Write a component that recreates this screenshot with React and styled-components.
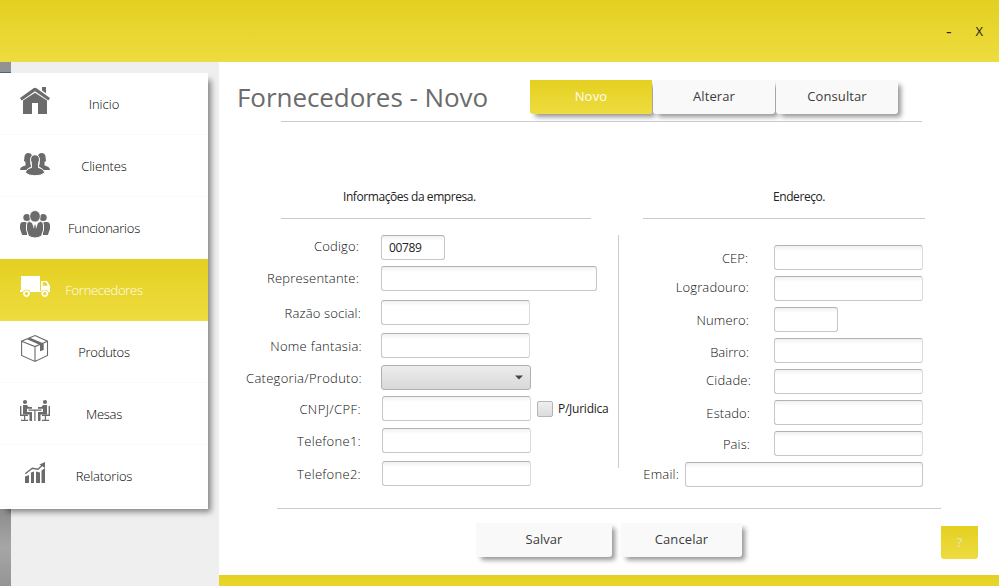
import React from "react";
import styled, { createGlobalStyle, css } from "styled-components";

const GlobalStyle = createGlobalStyle`
  * { box-sizing: border-box; }
  body { margin: 0; font-family: "Open Sans", "Noto Sans", sans-serif; overflow: hidden; }
  button, input { font: inherit; border: 0; margin: 0; padding: 0; }
  button { cursor: pointer; white-space: nowrap; }
`;

const yellow = "linear-gradient(#e4d020, #eedc40)";

const Window = styled.div`
  width: 999px;
  height: 586px;
  display: flex;
  flex-direction: column;
  background: #fff;
  overflow: hidden;
`;

const TitleBar = styled.header`
  height: 62px;
  flex: none;
  display: flex;
  justify-content: flex-end;
  align-items: center;
  gap: 24px;
  padding-right: 16px;
  background: ${yellow};
`;

const WindowButton = styled.button`
  background: none;
  font-size: ${(p) => p.$size || 13}px;
  line-height: 18px;
  color: #222;
`;

const Body = styled.div`
  flex: 1;
  display: flex;
  min-height: 0;
`;

const Sidebar = styled.aside`
  width: 219px;
  display: flex;
  flex-direction: column;
  background: #efefef;
`;

const EdgeTop = styled.div`
  width: 11px;
  height: 11px;
  background: #929292;
  border-bottom: 1px solid #48657c;
`;

const EdgeBottom = styled.div`
  width: 11px;
  flex: 1;
  background: linear-gradient(#8c8c8c, #a6a6a6 50%, #959595);
`;

const Menu = styled.nav`
  width: 208px;
  height: 436px;
  background: #fff;
  box-shadow: 5px 5px 6px -2px rgba(0, 0, 0, 0.45);
  position: relative;
`;

const MenuItem = styled.button`
  width: 208px;
  height: 62px;
  display: grid;
  grid-template-columns: 1fr auto 1fr;
  background: ${(p) => (p.$active ? yellow : "#fff")};
  color: ${(p) => (p.$active ? "#fffef4" : "#000")};
  border-bottom: ${(p) => (p.$active ? "0" : "1px solid #fbfbfb")};
  text-align: left;
  font-size: 13px;
  font-weight: 300;
`;

const MenuIcon = styled.svg`
  width: 30px;
  height: 30px;
  margin: 13px 0 0 20px;
  color: ${(p) => (p.$active ? "#fff" : "#6b6b6b")};
  fill: currentColor;
`;

const MenuText = styled.span`
  line-height: 62px;
  letter-spacing: ${(p) => p.$ls || 0}px;
`;

const Main = styled.main`
  width: 780px;
  display: flex;
  flex-direction: column;
`;

const Heading = styled.div`
  height: 59px;
  display: flex;
  align-items: flex-start;
  padding: 18px 0 0 18px;
`;

const Title = styled.h1`
  width: 293px;
  margin: -1px 0 0;
  font-size: 26px;
  line-height: 36px;
  font-weight: 400;
  letter-spacing: -0.06px;
  color: #6b6b6b;
  white-space: nowrap;
`;

const Tabs = styled.div`
  display: flex;
  gap: 1px;
`;

const ActionButton = styled.button`
  width: ${(p) => p.$w}px;
  height: 34px;
  padding-bottom: 2px;
  border-radius: 0 0 3px 3px;
  background: ${(p) => (p.$active ? yellow : "#f9f9f9")};
  color: ${(p) => (p.$active ? "#fffef4" : "#3c3c3c")};
  font-size: 13px;
  line-height: 32px;
  letter-spacing: ${(p) => p.$ls || 0}px;
  box-shadow: 4px 4px 5px -1px rgba(0, 0, 0, 0.42);
`;

const Rule = styled.div`
  height: 1px;
  flex: none;
  width: ${(p) => p.$w}px;
  margin-left: ${(p) => p.$x}px;
  background: #cbcbcb;
`;

const Form = styled.form`
  height: 386px;
  display: flex;
`;

const Section = styled.section`
  width: ${(p) => p.$w}px;
  display: flex;
  flex-direction: column;
`;

const SectionTitle = styled.h2`
  margin: 66px 0 0;
  padding-left: ${(p) => p.$x}px;
  height: 30px;
  font-size: 12px;
  line-height: 18px;
  font-weight: 400;
  letter-spacing: ${(p) => p.$ls}px;
  color: #222;
  white-space: nowrap;
`;

const Divider = styled.div`
  width: 1px;
  height: 233px;
  margin-top: 113px;
  background: #cbcbcb;
`;

const FieldRow = styled.div`
  height: 25px;
  margin-top: ${(p) => p.$mt}px;
  display: flex;
`;

const Label = styled.label`
  flex: none;
  width: ${(p) => p.$end}px;
  margin-right: ${(p) => p.$gap}px;
  padding-top: ${(p) => p.$dy}px;
  text-align: right;
  font-size: 13px;
  line-height: 20px;
  font-weight: 300;
  letter-spacing: ${(p) => p.$ls || 0}px;
  color: #111;
  white-space: nowrap;
`;

const box = css`
  width: ${(p) => p.$w}px;
  height: 25px;
  border: 1px solid #c6c6c6;
  border-top-color: #b2b2b2;
  border-radius: 3px;
`;

const Input = styled.input`
  ${box}
  border-right-color: ${(p) => (p.$w === 149 ? "#dadada" : "#c6c6c6")};
  padding: 0 7px;
  font-size: 12px;
  letter-spacing: -0.35px;
  color: #222;
  background: linear-gradient(#f1f1f1, #fff 5px);
  outline: none;
`;

const Select = styled.button`
  ${box}
  display: flex;
  align-items: center;
  justify-content: flex-end;
  padding-right: 7px;
  border-color: #b0b0b0;
  background: linear-gradient(#ececec, #d9d9d9);
`;

const CheckLabel = styled.label`
  display: flex;
  align-items: center;
  gap: 5px;
  margin-left: 6px;
  font-size: 12px;
  letter-spacing: -0.25px;
  color: #222;
  white-space: nowrap;
`;

const CheckBox = styled.span`
  width: 16px;
  height: 16px;
  border: 1px solid #b4b4b4;
  border-radius: 2px;
  background: linear-gradient(#efefef, #dcdcdc);
`;

const Footer = styled.div`
  flex: 1;
  display: flex;
  align-items: flex-start;
  padding: 14px 0 0 257px;
  gap: 9px;
`;

const HelpButton = styled.button`
  width: 37px;
  height: 33px;
  margin: 3px 0 0 190px;
  padding-bottom: 2px;
  border-radius: 0 0 3px 3px;
  background: ${yellow};
  color: #e6e6d8;
  font-size: 13px;
`;

const BottomBar = styled.div`
  height: 11px;
  flex: none;
  background: linear-gradient(#e4d020, #e8d62e);
`;

const icons = {
  home: (
    <>
      <path d="M0 12 L13.5 2.2 Q15 1.2 16.5 2.2 L30 12 L28.3 14.4 L15 5.2 L1.7 14.4Z" />
      <path d="M22 1h4v6.2l-4-2.8z" />
      <path d="M3 14.5 L15 6.8 L27 14.5 V28 H18 V17 H12 V28 H3Z" />
    </>
  ),
  clients: (
    <>
      <path d="M4.5 8.5 Q5 5 8.2 5 Q12 5 12 9 L10.3 12 V16 L11.3 18.2 Q8.5 19.5 8.5 22 H0 Q0 18.8 5.5 17.5 V14 L4 13Z" />
      <path d="M25.5 8.5 Q25 5 21.8 5 Q18 5 18 9 L19.7 12 V16 L18.7 18.2 Q21.5 19.5 21.5 22 H30 Q30 18.8 24.5 17.5 V14 L26 13Z" />
      <path
        stroke="#fff"
        strokeWidth="1"
        d="M10.5 12 Q10.7 6.8 15 6.8 Q19.3 6.8 19.5 12 L18.5 15.5 V19.5 Q24.5 21 24.5 25 Q21 27.8 15 27.8 Q9 27.8 5.5 25 Q5.5 21 11.5 19.5 V15.5Z"
      />
    </>
  ),
  staff: (
    <>
      <circle cx="6.8" cy="7.5" r="3.5" />
      <circle cx="23.2" cy="7.5" r="3.5" />
      <path d="M3 12 Q0 12 0 16 V19 L2.2 25 H7 L7.8 13 L5 12Z" />
      <path d="M27 12 Q30 12 30 16 V19 L27.8 25 H23 L22.2 13 L25 12Z" />
      <path
        stroke="#fff"
        strokeWidth="1"
        d="M9.5 11.3 L15 14 L20.5 11.3 Q23.5 11.5 23.5 15 V20 L21.5 26 Q15 30 8.5 26 L6.5 20 V15 Q6.5 11.5 9.5 11.3Z"
      />
      <ellipse cx="15" cy="6.3" rx="5.3" ry="5.8" stroke="#fff" strokeWidth=".8" />
      <path fill="#fff" d="M11.8 12.3 L14 19 L14.5 14.8 H15.5 L16 19 L18.2 12.3 L15 13.8Z" />
    </>
  ),
  truck: (
    <>
      <path d="M1 4h19v16H10.5a4.4 4.4 0 0 0-8 0H0v-2h1z" />
      <path
        fillRule="evenodd"
        d="M21 9h6l3 5v6h-1.5a4.3 4.3 0 0 0-7.5 0H10v-1h11z M22.7 10.3v3.5h5l-1.7-3.5z"
      />
      <path
        fillRule="evenodd"
        d="M6.5 18.2a3.4 3.4 0 1 0 .01 0z M6.5 20a1.6 1.6 0 1 1-.01 0z M24.8 18.2a3.4 3.4 0 1 0 .01 0z M24.8 20a1.6 1.6 0 1 1-.01 0z"
      />
    </>
  ),
  box: (
    <>
      <path
        fill="none"
        stroke="currentColor"
        strokeWidth="1.1"
        d="M15 1.6 L27.5 7.2 V21.5 L15 27.4 L1.6 21.5 V7.2Z M1.6 7.2 L15 12.6 L27.5 7.2 M15 12.6 V27.4"
      />
      <path d="M7 5.2 L10 3.8 L23.7 9.5 V16 L20 17.3 V11Z" />
    </>
  ),
  table: (
    <>
      <circle cx="5" cy="6" r="2.1" />
      <circle cx="25" cy="6" r="2.1" />
      <path d="M3 9h4l1.5 2H12v1.7H7V16h5v9H9.5v-6.5H3z" />
      <path d="M27 9h-4l-1.5 2H18v1.7h5V16h-5v9h2.5v-6.5H27z" />
      <path d="M0 10h1.4v8.5H8V20H5.2v3.7H8V25H1v-1.3h3V20H0z" />
      <path d="M30 10h-1.4v8.5H22V20h2.8v3.7H22V25h7v-1.3h-3V20h4z" />
      <path d="M8.5 13.5h13v1.3h-6V25h-1.2V14.8H8.5z" />
    </>
  ),
  chart: (
    <>
      <path d="M5 18.5l4-1.5v8H5zM11 14.5l3-1v11.5h-3zM16 13.5l4 1v10.5h-4zM21.5 12.5l3.5-2.5v15h-3.5z" />
      <path fill="none" stroke="currentColor" strokeWidth="1.4" d="M5.3 15.8 L12.3 10.2 L18 11.3 L23 6.5" />
      <path d="M25 4 V10 L19.5 6.5Z" />
    </>
  ),
};

const menu = [
  { text: "Inicio", icon: "home" },
  { text: "Clientes", icon: "clients", ls: -0.12 },
  { text: "Funcionarios", icon: "staff", ls: -0.24 },
  { text: "Fornecedores", icon: "truck", ls: -0.3, active: true },
  { text: "Produtos", icon: "box", ls: -0.28 },
  { text: "Mesas", icon: "table", ls: -0.25 },
  { text: "Relatorios", icon: "chart", ls: -0.2 },
];

const company = [
  { text: "Codigo:", ls: 0.15, mt: 16, end: 140, gap: 22, dy: 1, w: 64, value: "00789" },
  { text: "Representante:", ls: 0.2, mt: 6, end: 140, gap: 22, dy: 2, w: 216 },
  { text: "Razão social:", ls: 0.17, mt: 9, end: 142, gap: 20, dy: 3, w: 149 },
  { text: "Nome fantasia:", ls: 0.29, mt: 8, end: 143, gap: 19, dy: 3, w: 149 },
  { text: "Categoria/Produto:", ls: 0.28, mt: 7, end: 143, gap: 19, dy: 3, w: 150, select: true },
  { text: "CNPJ/CPF:", ls: 0.4, mt: 6, end: 142, gap: 21, dy: 3, w: 149, check: "P/Juridica" },
  { text: "Telefone1:", ls: 0.3, mt: 7, end: 142, gap: 21, dy: 3, w: 149 },
  { text: "Telefone2:", ls: 0.3, mt: 8, end: 142, gap: 21, dy: 3, w: 149 },
];

const address = [
  { text: "CEP:", mt: 26, end: 129, gap: 26, dy: 3, w: 149 },
  { text: "Logradouro:", ls: 0.13, mt: 6, end: 130, gap: 25, dy: 1, w: 149 },
  { text: "Numero:", ls: 0.15, mt: 6, end: 130, gap: 25, dy: 3, w: 64 },
  { text: "Bairro:", mt: 6, end: 130, gap: 25, dy: 4, w: 149 },
  { text: "Cidade:", ls: 0.2, mt: 6, end: 132, gap: 23, dy: 1, w: 149 },
  { text: "Estado:", ls: 0.1, mt: 6, end: 131, gap: 24, dy: 3, w: 149 },
  { text: "Pais:", ls: 0.1, mt: 6, end: 131, gap: 24, dy: 3, w: 149 },
  { text: "Email:", ls: 0.2, mt: 6, end: 60, gap: 6, dy: 2, w: 238 },
];

function Field({ field }) {
  return (
    <FieldRow $mt={field.mt}>
      <Label $end={field.end} $gap={field.gap} $dy={field.dy} $ls={field.ls}>
        {field.text}
      </Label>
      {field.select ? (
        <Select type="button" $w={field.w} aria-label={field.text}>
          <svg width="8" height="5" viewBox="0 0 8 5">
            <path d="M0 .5h8L4 4.5z" fill="#444" />
          </svg>
        </Select>
      ) : (
        <Input $w={field.w} defaultValue={field.value} aria-label={field.text} />
      )}
      {field.check && (
        <CheckLabel>
          <CheckBox />
          {field.check}
        </CheckLabel>
      )}
    </FieldRow>
  );
}

export default function App() {
  return (
    <Window>
      <GlobalStyle />
      <TitleBar>
        <WindowButton $size={17}>-</WindowButton>
        <WindowButton>X</WindowButton>
      </TitleBar>
      <Body>
        <Sidebar>
          <EdgeTop />
          <Menu>
            {menu.map((m) => (
              <MenuItem key={m.text} $active={m.active}>
                <MenuIcon viewBox="0 0 30 30" $active={m.active}>
                  {icons[m.icon]}
                </MenuIcon>
                <MenuText $ls={m.ls}>{m.text}</MenuText>
              </MenuItem>
            ))}
          </Menu>
          <EdgeBottom />
        </Sidebar>
        <Main>
          <Heading>
            <Title>Fornecedores - Novo</Title>
            <Tabs>
              <ActionButton $w={122} $ls={0.2} $active>Novo</ActionButton>
              <ActionButton $w={122} $ls={0.1}>Alterar</ActionButton>
              <ActionButton $w={122} $ls={0.1}>Consultar</ActionButton>
            </Tabs>
          </Heading>
          <Rule $x={62} $w={641} />
          <Form>
            <Section $w={399}>
              <SectionTitle $x={124} $ls={-0.43}>Informações da empresa.</SectionTitle>
              <Rule $x={62} $w={310} />
              {company.map((f) => (
                <Field key={f.text} field={f} />
              ))}
            </Section>
            <Divider />
            <Section $w={380}>
              <SectionTitle $x={154} $ls={-0.42}>Endereço.</SectionTitle>
              <Rule $x={24} $w={282} />
              {address.map((f) => (
                <Field key={f.text} field={f} />
              ))}
            </Section>
          </Form>
          <Rule $x={58} $w={664} />
          <Footer>
            <ActionButton $w={136} $ls={0.05}>Salvar</ActionButton>
            <ActionButton $w={121} $ls={0.1}>Cancelar</ActionButton>
            <HelpButton>?</HelpButton>
          </Footer>
          <BottomBar />
        </Main>
      </Body>
    </Window>
  );
}
